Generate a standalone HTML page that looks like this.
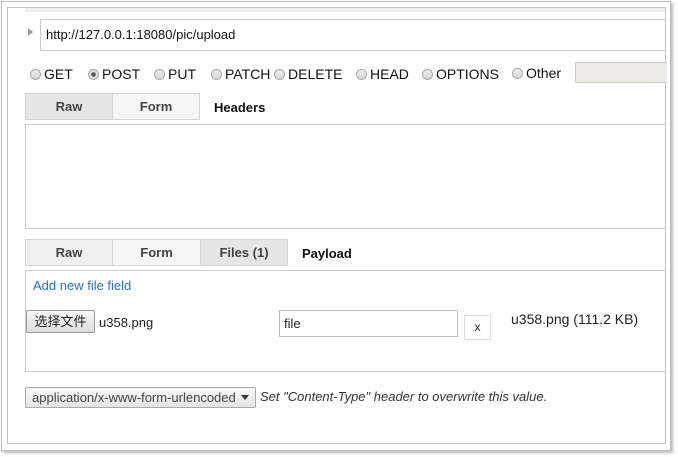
<!DOCTYPE html><html><head><style>
body{margin:0;width:678px;height:457px;background:#fff;font-family:"Liberation Sans","Noto Sans CJK SC",sans-serif;font-size:13px;color:#222;position:relative;overflow:hidden}
.a{position:absolute}
.tab{position:absolute;height:27px;border:1px solid #d4d4d4;box-sizing:border-box;text-align:center;line-height:26px;font-weight:bold;font-size:13px;color:#444}
.r{display:inline-block;width:11px;height:11px;border-radius:50%;border:1px solid #aaa;background:linear-gradient(#eee,#d6d6d6);box-sizing:border-box;vertical-align:-1px;margin-right:3px}
</style></head><body>
<div class="a" style="left:1px;top:1px;width:670px;height:450px;border:1px solid #bbb;box-sizing:border-box;box-shadow:2px 2px 3px #bbb"></div>
<div class="a" style="left:7px;top:7px;width:659px;height:437px;border:1px solid #c4c4c4;box-sizing:border-box;background:#fff"></div>
<div class="a" style="left:25px;top:8px;width:640px;height:4px;background:#f0f0f0"></div>
<div class="a" style="left:28px;top:28px;width:0;height:0;border-left:5px solid #999;border-top:4px solid transparent;border-bottom:4px solid transparent"></div>
<div class="a" style="left:40px;top:19px;width:626px;height:32px;border:1px solid #ccc;box-sizing:border-box;border-right:none;padding-left:5px;line-height:30px;font-size:13px;color:#111">http://127.0.0.1:18080/pic/upload</div>
<div class="a" style="top:66px;left:30px;font-size:14px;color:#111;white-space:nowrap">
<span class="a" style="left:0"><span class="r"></span>GET</span>
<span class="a" style="left:58px"><span class="r" style="background:radial-gradient(#555 30%,#ddd 40%)"></span>POST</span>
<span class="a" style="left:124px"><span class="r"></span>PUT</span>
<span class="a" style="left:181px"><span class="r"></span>PATCH</span>
<span class="a" style="left:244px"><span class="r"></span>DELETE</span>
<span class="a" style="left:326px"><span class="r"></span>HEAD</span>
<span class="a" style="left:392px"><span class="r"></span>OPTIONS</span>
<span class="a" style="left:482px;top:-1px"><span class="r"></span>Other</span>
</div>
<div class="a" style="left:575px;top:62px;width:92px;height:21px;background:#ebebe4;border:1px solid #ccc;box-sizing:border-box;border-right:none"></div>
<div class="tab" style="left:25px;top:93px;width:88px;background:#e6e6e6">Raw</div>
<div class="tab" style="left:112px;top:93px;width:88px;background:#f6f6f6">Form</div>
<div class="a" style="left:214px;top:100px;font-weight:bold;font-size:13px;color:#111">Headers</div>
<div class="a" style="left:25px;top:124px;width:641px;height:105px;border:1px solid #ccc;border-right:none;box-sizing:border-box"></div>
<div class="tab" style="left:25px;top:239px;width:88px;background:#f0f0f0">Raw</div>
<div class="tab" style="left:112px;top:239px;width:89px;background:#f6f6f6">Form</div>
<div class="tab" style="left:200px;top:239px;width:88px;background:#e6e6e6">Files (1)</div>
<div class="a" style="left:302px;top:246px;font-weight:bold;font-size:13px;color:#111">Payload</div>
<div class="a" style="left:25px;top:270px;width:641px;height:102px;border:1px solid #ccc;border-right:none;box-sizing:border-box"></div>
<div class="a" style="left:33px;top:278px;color:#2a6fd0;font-size:13px">Add new file field</div>
<div class="a" style="left:26px;top:310px;width:69px;height:23px;border:1px solid #999;border-radius:2px;background:linear-gradient(#f6f6f6,#dedede);box-sizing:border-box;text-align:center;line-height:21px;font-size:13px">选择文件</div>
<div class="a" style="left:99px;top:315px;font-size:13px">u358.png</div>
<div class="a" style="left:279px;top:310px;width:179px;height:27px;border:1px solid #bbb;box-sizing:border-box;padding-left:4px;line-height:25px;font-size:13px">file</div>
<div class="a" style="left:464px;top:315px;width:27px;height:25px;border:1px solid #ddd;box-sizing:border-box;text-align:center;line-height:23px;font-size:12px">x</div>
<div class="a" style="left:511px;top:311px;font-size:14px">u358.png (111.2 KB)</div>
<div class="a" style="left:25px;top:387px;width:231px;height:21px;border:1px solid #aaa;border-radius:2px;background:linear-gradient(#f8f8f8,#e4e4e4);box-sizing:border-box;padding-left:6px;line-height:19px;font-size:13px;color:#444;white-space:nowrap">application/x-www-form-urlencoded<span class="a" style="right:6px;top:7px;border-top:5px solid #333;border-left:4px solid transparent;border-right:4px solid transparent"></span></div>
<div class="a" style="left:260px;top:389px;font-style:italic;font-size:13px;color:#333">Set "Content-Type" header to overwrite this value.</div>
</body></html>
